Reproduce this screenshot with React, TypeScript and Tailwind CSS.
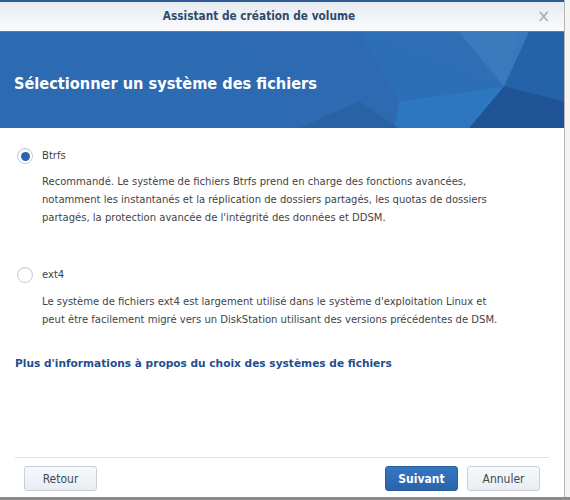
import React, { useState } from "react";

const font = { fontFamily: '"DejaVu Sans Condensed", "DejaVu Sans", Verdana, sans-serif' };
const wide = { fontFamily: '"DejaVu Sans", Verdana, sans-serif' };

const Radio = ({ checked, onClick }: { checked: boolean; onClick: () => void }) => (
  <button
    onClick={onClick}
    className="w-4 h-4 rounded-full border border-[#c3cad3] bg-white flex items-center justify-center shrink-0 shadow-[inset_0_1px_1px_rgba(0,0,0,0.06)]"
  >
    {checked && <span className="w-[9px] h-[9px] rounded-full bg-[#2b63ad]" />}
  </button>
);

const HeaderArt = () => (
  <svg className="absolute inset-0 w-full h-full" viewBox="0 0 565 97" preserveAspectRatio="none">
    <polygon points="235,0 565,0 565,97 300,97" fill="#2d6ab1" />
    <polygon points="360,0 520,0 505,55" fill="#2f6fb6" />
    <polygon points="460,0 530,0 505,55" fill="#3f7fc0" opacity="0.7" />
    <polygon points="505,55 530,0 565,0 565,70" fill="#2563a8" />
    <polygon points="400,70 505,55 470,97 395,97" fill="#2b84cf" opacity="0.5" />
    <polygon points="505,55 565,70 565,97 470,97" fill="#1f5395" />
    <polygon points="300,97 360,70 400,97" fill="#275f9f" opacity="0.6" />
    <polygon points="400,70 505,55 360,0" fill="#2c74bb" opacity="0.5" />
  </svg>
);

export default function App() {
  const [fs, setFs] = useState<"btrfs" | "ext4">("btrfs");

  return (
    <div className="w-[570px] h-[500px] flex bg-[#f4f4f4] overflow-hidden" style={font}>
      <div className="w-[565px] h-[497px] flex flex-col bg-white border-r border-[#b4b4b4]">
        {/* Title bar */}
        <div className="h-[31px] shrink-0 border-t-2 border-[#2c5b93] bg-gradient-to-b from-[#e6ebf1] to-[#fafbfd] flex items-center justify-center pr-[46px] relative">
          <span className="text-[11.75px] font-bold text-[#2f4a6c]">Assistant de création de volume</span>
          <span className="absolute right-[14px] top-[6px] text-[#a4a9af] text-[17px] leading-none">×</span>
        </div>

        {/* Blue header */}
        <div className="h-[97px] shrink-0 relative bg-[#2c6ab2] border-t border-[#4b7fb9] overflow-hidden">
          <HeaderArt />
          <div className="relative h-full flex items-center pl-[14px] pt-[8px]">
            <h1 className="text-white font-bold text-[16.2px]">Sélectionner un système des fichiers</h1>
          </div>
        </div>

        {/* Content */}
        <div className="flex-1 flex flex-col text-[11.15px] text-[#3f4347] leading-[18px]">
          <div className="mt-[20px] pl-[17px] flex items-center gap-[9px] h-4">
            <Radio checked={fs === "btrfs"} onClick={() => setFs("btrfs")} />
            <span className="text-[#3c3f43]">Btrfs</span>
          </div>
          <p className="mt-[9px] pl-[42px] pr-[20px]">
            Recommandé. Le système de fichiers Btrfs prend en charge des fonctions avancées,<br />
            notamment les instantanés et la réplication de dossiers partagés, les quotas de dossiers<br />
            partagés, la protection avancée de l'intégrité des données et DDSM.
          </p>

          <div className="mt-[40px] pl-[17px] flex items-center gap-[9px] h-4">
            <Radio checked={fs === "ext4"} onClick={() => setFs("ext4")} />
            <span className="text-[#3c3f43]">ext4</span>
          </div>
          <p className="mt-[10px] pl-[42px] pr-[20px]">
            Le système de fichiers ext4 est largement utilisé dans le système d'exploitation Linux et<br />
            peut être facilement migré vers un DiskStation utilisant des versions précédentes de DSM.
          </p>

          <a className="mt-[25px] pl-[15px] font-bold text-[10.6px] text-[#1f4f8f] cursor-pointer" style={wide}>
            Plus d'informations à propos du choix des systèmes de fichiers
          </a>
        </div>

        {/* Footer */}
        <div className="shrink-0 px-[15px]">
          <div className="h-px bg-[#dfe3e8]" />
          <div className="flex items-center pt-[8px] pb-[6px] px-[9px] text-[12px]">
            <button className="w-[73px] h-[25px] rounded-[3px] border border-[#c7d0da] bg-gradient-to-b from-[#f7f9fb] to-[#e8edf2] text-[#3f4a56]">
              Retour
            </button>
            <div className="flex-1" />
            <button className="w-[73px] h-[25px] rounded-[3px] border border-[#2a5d9d] bg-gradient-to-b from-[#3577c2] to-[#2a64ab] text-white font-bold">
              Suivant
            </button>
            <button className="ml-[9px] w-[73px] h-[25px] rounded-[3px] border border-[#c7d0da] bg-gradient-to-b from-[#f7f9fb] to-[#e8edf2] text-[#3f4a56]">
              Annuler
            </button>
          </div>
        </div>
      </div>
      <div className="absolute left-0 top-[497px] w-[570px] h-[3px] bg-[#8a8a8a]" />
    </div>
  );
}
